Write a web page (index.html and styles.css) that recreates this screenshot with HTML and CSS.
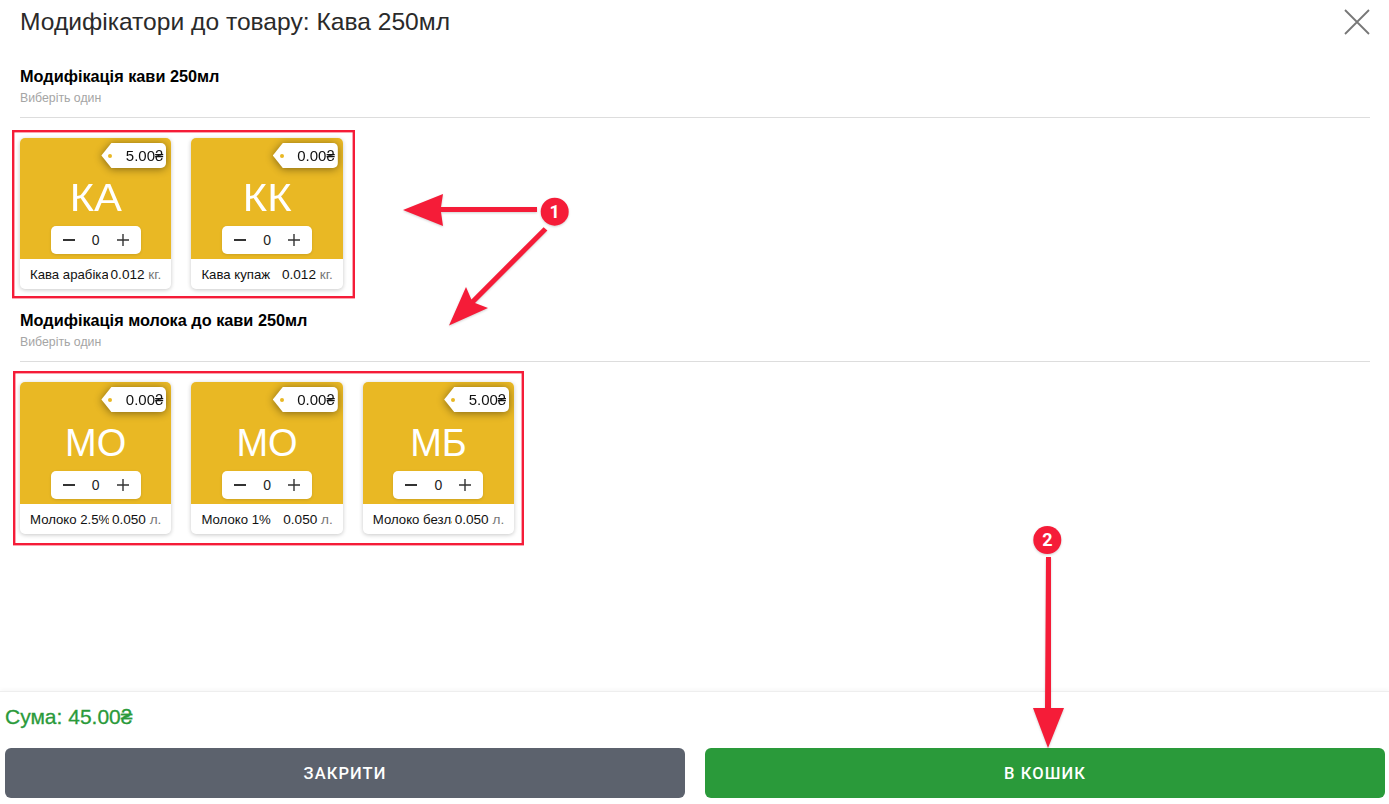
FILE: index.html
```html
<!DOCTYPE html>
<html lang="uk">
<head>
  <meta charset="UTF-8">
  <title>Модифікатори до товару</title>
  <link rel="stylesheet" href="styles.css">
</head>
<body>
<div id="modal">
  <div class="modal-head">
    <h1>Модифікатори до товару: Кава 250мл</h1>
    <button class="close-button" aria-label="Закрити">
      <svg width="26" height="26" viewBox="0 0 26 26"><path d="M1 1 L25 25 M25 1 L1 25" stroke="#777" stroke-width="1.8" fill="none"/></svg>
    </button>
  </div>

  <div class="modal-body">
    <div class="group">
      <h2>Модифікація кави 250мл</h2>
      <div class="hint">Виберіть один</div>
      <div class="cards">
        <div class="card">
          <div class="card-top">
            <div class="tag"><div class="tag-body"><i></i>5.00₴</div></div>
            <div class="initials wide">КА</div>
            <div class="counter">
              <svg width="14" height="14" viewBox="0 0 14 14"><path d="M1 7 H13" stroke="#333" stroke-width="1.8"/></svg>
              <span>0</span>
              <svg width="14" height="14" viewBox="0 0 14 14"><path d="M1 7 H13 M7 1 V13" stroke="#333" stroke-width="1.4"/></svg>
            </div>
          </div>
          <div class="card-info"><span class="name">Кава арабіка</span><span class="amount">0.012 <em>кг.</em></span></div>
        </div>
        <div class="card">
          <div class="card-top">
            <div class="tag"><div class="tag-body"><i></i>0.00₴</div></div>
            <div class="initials wide">КК</div>
            <div class="counter">
              <svg width="14" height="14" viewBox="0 0 14 14"><path d="M1 7 H13" stroke="#333" stroke-width="1.8"/></svg>
              <span>0</span>
              <svg width="14" height="14" viewBox="0 0 14 14"><path d="M1 7 H13 M7 1 V13" stroke="#333" stroke-width="1.4"/></svg>
            </div>
          </div>
          <div class="card-info"><span class="name">Кава купаж</span><span class="amount">0.012 <em>кг.</em></span></div>
        </div>
      </div>
    </div>

    <div class="group">
      <h2>Модифікація молока до кави 250мл</h2>
      <div class="hint">Виберіть один</div>
      <div class="cards">
        <div class="card">
          <div class="card-top">
            <div class="tag"><div class="tag-body"><i></i>0.00₴</div></div>
            <div class="initials">МО</div>
            <div class="counter">
              <svg width="14" height="14" viewBox="0 0 14 14"><path d="M1 7 H13" stroke="#333" stroke-width="1.8"/></svg>
              <span>0</span>
              <svg width="14" height="14" viewBox="0 0 14 14"><path d="M1 7 H13 M7 1 V13" stroke="#333" stroke-width="1.4"/></svg>
            </div>
          </div>
          <div class="card-info"><span class="name">Молоко 2.5%</span><span class="amount">0.050 <em>л.</em></span></div>
        </div>
        <div class="card">
          <div class="card-top">
            <div class="tag"><div class="tag-body"><i></i>0.00₴</div></div>
            <div class="initials">МО</div>
            <div class="counter">
              <svg width="14" height="14" viewBox="0 0 14 14"><path d="M1 7 H13" stroke="#333" stroke-width="1.8"/></svg>
              <span>0</span>
              <svg width="14" height="14" viewBox="0 0 14 14"><path d="M1 7 H13 M7 1 V13" stroke="#333" stroke-width="1.4"/></svg>
            </div>
          </div>
          <div class="card-info"><span class="name">Молоко 1%</span><span class="amount">0.050 <em>л.</em></span></div>
        </div>
        <div class="card">
          <div class="card-top">
            <div class="tag"><div class="tag-body"><i></i>5.00₴</div></div>
            <div class="initials">МБ</div>
            <div class="counter">
              <svg width="14" height="14" viewBox="0 0 14 14"><path d="M1 7 H13" stroke="#333" stroke-width="1.8"/></svg>
              <span>0</span>
              <svg width="14" height="14" viewBox="0 0 14 14"><path d="M1 7 H13 M7 1 V13" stroke="#333" stroke-width="1.4"/></svg>
            </div>
          </div>
          <div class="card-info"><span class="name">Молоко безлактозне</span><span class="amount">0.050 <em>л.</em></span></div>
        </div>
      </div>
    </div>
  </div>

  <div class="modal-foot">
    <div class="total">Сума: 45.00₴</div>
    <div class="foot-buttons">
      <button class="foot-button grey">ЗАКРИТИ</button>
      <button class="foot-button green">В КОШИК</button>
    </div>
  </div>
</div>

<!-- red marks drawn on top of the screenshot -->
<svg id="marks" width="1389" height="804" viewBox="0 0 1389 804">
  <rect x="13.2" y="131.2" width="340.6" height="166" class="box"/>
  <rect x="14.2" y="372.2" width="508.6" height="172" class="box"/>

  <path d="M537 207 V212 H441 L443 226 L403 210 L443 194 L441 207 Z" class="arrow"/>
  <path d="M543.6 227.2 L547.4 230.6 L475 303 L488 308 L449 325.500 L466 287 L471.400 299.400 Z" class="arrow"/>
  <path d="M1046 557 H1051 V708 H1064 L1048 748 L1033 708 H1045 Z" class="arrow"/>

  <circle cx="554.700" cy="211.700" r="14" class="badge"/>
  <text x="554.700" y="218" class="badge-num">1</text>
  <circle cx="1047.300" cy="540" r="14" class="badge"/>
  <text x="1047.300" y="546.300" class="badge-num">2</text>
</svg>
</body>
</html>
```

FILE: styles.css
```css
html, body {
  margin: 0;
  height: 100%;
  background: #fff;
  overflow: hidden;
}
body {
  font-family: 'Liberation Sans', Arial, sans-serif;
  color: #222;
}
#modal {
  display: flex;
  flex-direction: column;
  height: 804px;
}
.modal-head {
  display: flex;
  justify-content: space-between;
  align-items: center;
  height: 44px;
  padding: 0 19px 0 20px;
}
.modal-head h1 {
  margin: 0;
  font-size: 24.6px;
  font-weight: normal;
  color: #2a2a2a;
}
.close-button {
  padding: 0;
  border: 0;
  background: none;
  height: 26px;
}
.modal-body {
  flex: 1;
  padding: 22px 19px 0 20px;
}
.group {
  margin-bottom: 21px;
}
.group h2 {
  margin: 0;
  font-size: 16.3px;
  line-height: 20px;
  color: #000;
}
.hint {
  margin-top: 5px;
  padding-bottom: 12px;
  border-bottom: 1px solid #ddd;
  font-size: 12.3px;
  line-height: 14px;
  color: #a5a5a5;
}
.cards {
  display: grid;
  grid-template-columns: repeat(3, 151.4px);
  gap: 20px;
  margin-top: 20px;
}
.card {
  border-radius: 5px;
  overflow: hidden;
  background: #fff;
  box-shadow: 0 1px 4px rgba(0,0,0,0.22);
}
.card-top {
  position: relative;
  display: flex;
  flex-direction: column;
  align-items: center;
  justify-content: flex-end;
  height: 121px;
  padding-bottom: 5px;
  box-sizing: border-box;
  background: #e9b824;
}
.group:last-child .card-top {
  height: 122px;
}
.tag {
  position: absolute;
  top: 5px;
  right: 5px;
  filter: drop-shadow(0 1px 4px rgba(0,0,0,0.45));
}
.tag-body {
  display: flex;
  align-items: center;
  justify-content: flex-end;
  box-sizing: border-box;
  width: 65px;
  height: 25px;
  padding-right: 3px;
  border-radius: 0 5px 5px 0;
  background: #fff;
  clip-path: polygon(10px 0, 100% 0, 100% 100%, 10px 100%, 0 50%);
  font-size: 15px;
  color: #111;
}
.tag-body i {
  width: 4px;
  height: 4px;
  margin-right: auto;
  margin-left: 7px;
  border-radius: 50%;
  background: #e9b824;
}
.initials {
  margin-bottom: 6px;
  font-size: 38px;
  line-height: 44px;
  color: #fff;
}
.wide {
  transform: scaleX(1.1);
}
.counter {
  display: flex;
  align-items: center;
  justify-content: space-between;
  box-sizing: border-box;
  width: 90px;
  height: 28px;
  padding: 0 11px;
  border-radius: 5px;
  background: #fff;
  box-shadow: 0 1px 3px rgba(0,0,0,0.12);
  font-size: 14px;
  color: #222;
}
.card-info {
  display: flex;
  align-items: center;
  gap: 3px;
  height: 30px;
  padding: 0 10px;
  font-size: 13.2px;
  color: #111;
}
.name {
  flex: 1;
  min-width: 0;
  overflow: hidden;
  white-space: nowrap;
}
.amount {
  font-size: 13.6px;
  white-space: nowrap;
}
.amount em {
  font-style: normal;
  color: #777;
}
.modal-foot {
  border-top: 1px solid #eee;
  box-shadow: 0 -2px 4px rgba(0,0,0,0.03);
  padding: 0 4px 6px 5px;
}
.total {
  height: 56px;
  line-height: 50px;
  font-size: 21px;
  color: #2a9a3a;
  -webkit-text-stroke: 0.3px #2a9a3a;
}
.foot-buttons {
  display: flex;
  gap: 20px;
}
.foot-button {
  flex: 1;
  height: 50px;
  border: 0;
  border-radius: 6px;
  color: #fff;
  font-family: Roboto, sans-serif;
  font-size: 16.5px;
  font-weight: 500;
  letter-spacing: 1.1px;
}
.grey {
  background: #5c626d;
}
.green {
  background: #2a9a3a;
}
#marks {
  position: absolute;
  left: 0;
  top: 0;
  pointer-events: none;
}
.box {
  fill: none;
  stroke: #f51c38;
  stroke-width: 2.4;
}
.arrow, .badge {
  fill: #f51c38;
  filter: drop-shadow(0 1px 1px rgba(0,0,0,0.18));
}
.badge-num {
  fill: #fff;
  font-family: Roboto, sans-serif;
  font-size: 18px;
  font-weight: 700;
  text-anchor: middle;
}
```
